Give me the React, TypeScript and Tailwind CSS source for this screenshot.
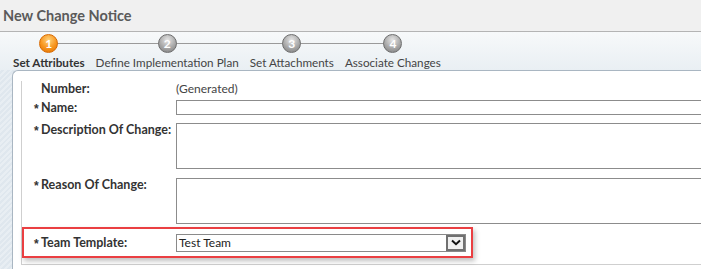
const font = { fontFamily: 'Lato, "Open Sans", sans-serif' }

const steps = [
  { n: 1, label: 'Set Attributes', active: true },
  { n: 2, label: 'Define Implementation Plan', active: false },
  { n: 3, label: 'Set Attachments', active: false },
  { n: 4, label: 'Associate Changes', active: false },
]

function StepCircle({ n, active }: { n: number; active: boolean }) {
  return (
    <div
      className={[
        'relative z-10 flex h-[19px] w-[19px] items-center justify-center rounded-full border text-[12px] font-bold leading-none text-white',
        active
          ? 'border-[#d86a00] bg-[radial-gradient(circle_at_50%_30%,#ffd27a,#f7941d_55%,#e07000)]'
          : 'border-[#6e6e6e] bg-[radial-gradient(circle_at_50%_30%,#e6e6e6,#a8a8a8_55%,#7a7a7a)]',
      ].join(' ')}
    >
      {n}
    </div>
  )
}

function Label({ text, required }: { text: string; required?: boolean }) {
  return (
    <div className="flex w-[154px] shrink-0 whitespace-nowrap pl-[12px] text-[12.5px] font-bold leading-[14px] text-[#333]">
      <span className="w-[7px] translate-y-[1px] font-['Liberation_Sans',sans-serif] text-[12px]">
        {required ? '*' : ''}
      </span>
      <span>{text}</span>
    </div>
  )
}

export default function App() {
  return (
    <div className="h-[269px] w-[701px] overflow-hidden bg-[#f0f0f0]" style={font}>
      <div className="flex h-[32px] items-center border-b border-[#b4b4b4] pl-[3px] text-[14.5px] font-bold text-[#5a5a5a]">
        New Change Notice
      </div>

      <div className="h-[237px] bg-[repeating-linear-gradient(135deg,#dfe7ee_0px,#dfe7ee_2px,#e8eef3_2px,#e8eef3_4px)]">
        <div className="relative flex h-[38px] gap-[11px] bg-gradient-to-b from-[#f7f9fa] to-[#e9eff3] pl-[13px] pt-[2px]">
          <div className="absolute left-[48px] top-[11px] h-px w-[346px] bg-[#9a9a9a]" />
          {steps.map((s) => (
            <div key={s.n} className="flex flex-col items-center">
              <StepCircle n={s.n} active={s.active} />
              <div
                className={[
                  'mt-[2px] whitespace-nowrap text-[11.7px] leading-[14px]',
                  s.active ? 'font-bold text-[#333]' : 'text-[#444]',
                ].join(' ')}
              >
                {s.label}
              </div>
            </div>
          ))}
        </div>

        <div className="ml-[12px] h-[199px] rounded-tl-[6px] border-l border-t border-[#a9b6c2] bg-white pl-[8px] pt-[10px]">
          <div className="h-[184px] border-b border-l border-[#cfcfcf]">
            <div className="flex h-[15px] items-center">
              <Label text="Number:" />
              <div className="text-[12px] text-[#444]">(Generated)</div>
            </div>
            <div className="mt-[4px] flex h-[15px] items-center">
              <Label text="Name:" required />
              <div className="h-[15px] flex-1 border border-r-0 border-[#8c8c8c] bg-white" />
            </div>
            <div className="mt-[8px] flex">
              <Label text="Description Of Change:" required />
              <div className="h-[46px] flex-1 border border-r-0 border-[#8c8c8c] bg-white" />
            </div>
            <div className="mt-[9px] flex">
              <Label text="Reason Of Change:" required />
              <div className="h-[46px] flex-1 border border-r-0 border-[#8c8c8c] bg-white" />
            </div>
            <div className="mt-[3px] flex h-[31px] w-[451px] items-center border-2 border-[#ea3f42] shadow-[2px_3px_5px_rgba(0,0,0,0.25)]">
              <div className="-ml-[2px]">
                <Label text="Team Template:" required />
              </div>
              <div className="flex h-[18px] w-[290px] items-center border border-[#8a8a8a] bg-white pl-[2px] text-[12px] text-[#222]">
                <span className="flex-1">Test Team</span>
                <div className="flex h-[16px] w-[19px] items-center justify-center border-2 border-[#707070] bg-[#f0f0f0]">
                  <svg width="10" height="7" viewBox="0 0 10 7">
                    <path d="M1 1.5 L5 5.2 L9 1.5" fill="none" stroke="#111" strokeWidth="2" />
                  </svg>
                </div>
              </div>
            </div>
          </div>
        </div>
      </div>
    </div>
  )
}
